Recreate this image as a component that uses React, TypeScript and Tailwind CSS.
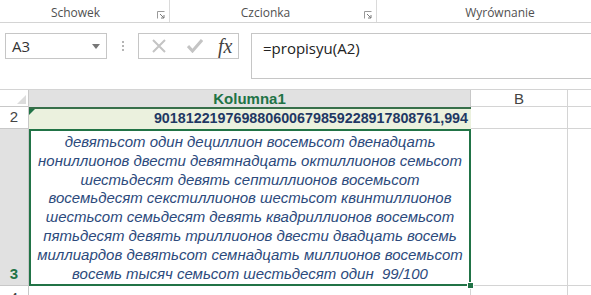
import React from 'react'

const lines = [
  'девятьсот один дециллион восемьсот двенадцать',
  'нониллионов двести девятнадцать октиллионов семьсот',
  'шестьдесят девять септиллионов восемьсот',
  'восемьдесят секстиллионов шестьсот квинтиллионов',
  'шестьсот семьдесят девять квадриллионов восемьсот',
  'пятьдесят девять триллионов двести двадцать восемь',
  'миллиардов девятьсот семнадцать миллионов восемьсот',
  'восемь тысяч семьсот шестьдесят один  99/100',
]

// mała ikonka "launcher" w rogu grupy wstążki
function Launcher() {
  return (
    <svg width="8" height="8" viewBox="0 0 8 8" className="absolute right-[4px] top-[11px]">
      <path d="M0.5 7.5V0.5H7.5" fill="none" stroke="#9a9a9a" strokeWidth="1" />
      <path d="M3 3L7 7M7 4V7H4" fill="none" stroke="#7a7a7a" strokeWidth="1" />
    </svg>
  )
}

export default function App() {
  return (
    <div className="w-[591px] h-[295px] overflow-hidden bg-white font-['Open_Sans',sans-serif] text-[#444]">
      {/* wstążka - nazwy grup */}
      <div className="flex h-[23px] border-b border-[#d4d4d4] text-[12px] text-[#505050]">
        <div className="relative w-[170px] border-r border-[#dadada] flex justify-center pt-[4px]">
          <span className="-ml-[18px]">Schowek</span>
          <Launcher />
        </div>
        <div className="relative w-[207px] border-r border-[#dadada] flex justify-center pt-[4px]">
          <span className="-ml-[15px]">Czcionka</span>
          <Launcher />
        </div>
        <div className="flex-1 flex justify-center pt-[4px]">
          <span className="ml-[32px]">Wyrównanie</span>
        </div>
      </div>

      {/* pasek formuły */}
      <div className="flex items-start pt-[10px] h-[66px]">
        <div className="ml-[5px] w-[102px] h-[26px] border border-[#c6c6c6] flex items-center justify-between pl-[6px] pr-[6px] text-[15px] text-[#333]">
          <span>A3</span>
          <svg width="8" height="5" viewBox="0 0 8 5">
            <path d="M0 0H8L4 5Z" fill="#777" />
          </svg>
        </div>
        <div className="w-[31px] h-[26px] flex flex-col items-center justify-center gap-[2px]">
          <div className="w-[2px] h-[2px] bg-[#b5b5b5]" />
          <div className="w-[2px] h-[2px] bg-[#b5b5b5]" />
          <div className="w-[2px] h-[2px] bg-[#b5b5b5]" />
        </div>
        <div className="w-[101px] h-[26px] border border-[#c6c6c6] flex items-center">
          <svg width="16" height="16" viewBox="0 0 16 16" className="ml-[12px]">
            <path d="M2 2L14 14M14 2L2 14" stroke="#c4c4c4" strokeWidth="2" />
          </svg>
          <svg width="16" height="14" viewBox="0 0 16 14" className="ml-[20px]">
            <path d="M1 7L5.5 12L15 1" fill="none" stroke="#c4c4c4" strokeWidth="3" />
          </svg>
          <span className="ml-[15px] font-['Liberation_Serif',serif] italic text-[20px] leading-none text-[#444]">
            fx
          </span>
        </div>
        <div className="ml-[12px] flex-1 h-[46px] border-l border-t border-b border-[#c6c6c6] pl-[11px] pt-[3px] text-[15px] text-[#222]">
          =propisyu(A2)
        </div>
      </div>

      {/* arkusz */}
      <div className="grid grid-cols-[29px_442px_97px_1fr] grid-rows-[17px_22px_157px_1fr] h-[206px] font-['Liberation_Sans',Arial,sans-serif] border-t border-[#d4d4d4]">
        {/* nagłówki kolumn */}
        <div className="relative border-r border-b border-[#c8c8c8] bg-white">
          <svg width="9" height="9" viewBox="0 0 9 9" className="absolute right-[2px] bottom-[2px]">
            <path d="M9 0V9H0Z" fill="#dcdcdc" />
          </svg>
        </div>
        <div className="bg-[#e1e1e1] border-r border-[#c8c8c8] flex items-center justify-center text-[15px] font-bold text-[#217346] leading-none pb-[1px]">
          Kolumna1
        </div>
        <div className="border-r border-b border-[#d4d4d4] flex items-center justify-center text-[15px] text-[#444] leading-none">
          B
        </div>
        <div className="border-b border-[#d4d4d4]" />

        {/* wiersz 2 */}
        <div className="border-r border-b border-[#c8c8c8] flex items-center justify-center text-[15px] text-[#444]">
          2
        </div>
        <div className="relative bg-[#ebf1de] border-t-2 border-[#376f4a] flex items-center justify-end pr-[3px] text-[14.3px] font-bold text-[#1f3864]">
          <svg width="6" height="6" viewBox="0 0 6 6" className="absolute left-0 top-0">
            <path d="M0 0H6L0 6Z" fill="#217346" />
          </svg>
          901812219769880600679859228917808761,994
        </div>
        <div className="border-r border-b border-[#d4d4d4]" />
        <div className="border-b border-[#d4d4d4]" />

        {/* wiersz 3 */}
        <div className="bg-[#e1e1e1] border-r border-b border-[#c8c8c8] flex items-end justify-center pb-[0px] text-[15px] font-bold text-[#217346]">
          3
        </div>
        <div className="relative border-2 border-[#217346] flex flex-col justify-end items-center pb-[0px] italic text-[15px] leading-[18.9px] text-[#2c4a7c]">
          {lines.map((line, i) => (
            <div key={i} className="whitespace-pre">
              {line}
            </div>
          ))}
          <div className="absolute -right-[5px] -bottom-[5px] w-[7px] h-[7px] bg-[#217346] border border-white" />
        </div>
        <div className="border-r border-b border-[#d4d4d4]" />
        <div className="border-b border-[#d4d4d4]" />

        {/* wiersz 4 */}
        <div className="border-r border-[#c8c8c8] flex items-start justify-center pt-[1px] text-[15px] text-[#444]">
          4
        </div>
        <div className="border-r border-[#d4d4d4]" />
        <div className="border-r border-[#d4d4d4]" />
        <div />
      </div>
    </div>
  )
}
